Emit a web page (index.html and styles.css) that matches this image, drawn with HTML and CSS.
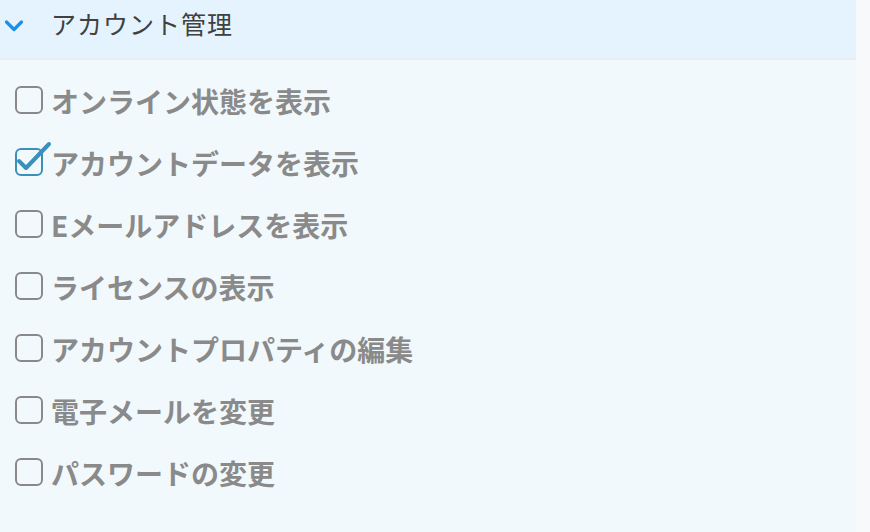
FILE: index.html
```html
<!DOCTYPE html>
<html lang="ja">
<head>
    <meta charset="UTF-8">
    <meta name="viewport" content="width=device-width, initial-scale=1.0">
    <title>アカウント管理</title>
    <link rel="stylesheet" href="styles.css">
</head>
<body>
    <div class="panel">
        <div class="panel-header">
            <svg class="chevron" width="20" height="14" viewBox="0 0 20 14">
                <path d="M2.5 3 L10 10.5 L17.5 3" fill="none" stroke="#1d8fe6" stroke-width="3.2" stroke-linecap="round" stroke-linejoin="round"/>
            </svg>
            <span class="panel-title">アカウント管理</span>
        </div>

        <ul class="perm-list">
            <li class="perm-item">
                <span class="box"></span>
                <span class="perm-label">オンライン状態を表示</span>
            </li>
            <li class="perm-item">
                <span class="box checked">
                    <!-- チェックマークは枠の外まで伸びる -->
                    <svg class="tick" width="40" height="34" viewBox="0 0 40 34">
                        <path d="M6 20 L13 27 L36 3" fill="none" stroke="#3a8fbb" stroke-width="4" stroke-linecap="round" stroke-linejoin="round"/>
                    </svg>
                </span>
                <span class="perm-label">アカウントデータを表示</span>
            </li>
            <li class="perm-item">
                <span class="box"></span>
                <span class="perm-label">Eメールアドレスを表示</span>
            </li>
            <li class="perm-item">
                <span class="box"></span>
                <span class="perm-label">ライセンスの表示</span>
            </li>
            <li class="perm-item">
                <span class="box"></span>
                <span class="perm-label">アカウントプロパティの編集</span>
            </li>
            <li class="perm-item">
                <span class="box"></span>
                <span class="perm-label">電子メールを変更</span>
            </li>
            <li class="perm-item">
                <span class="box"></span>
                <span class="perm-label">パスワードの変更</span>
            </li>
        </ul>
    </div>
</body>
</html>
```

FILE: styles.css
```css
* {
    margin: 0;
    padding: 0;
    box-sizing: border-box;
}

body {
    font-family: "Noto Sans CJK JP", "Noto Sans", sans-serif;
    background-color: #f8f9fa;
    width: 870px;
    height: 532px;
    overflow: hidden;
}

.panel {
    width: 856px;
    height: 532px;
    background-color: #f2f9fd;
}

.panel-header {
    height: 60px;
    padding-bottom: 12px;
    background-color: #e4f3fd;
    border-bottom: 2px solid #eaeef1;
    display: flex;
    align-items: center;
}

.chevron {
    margin-left: 4px;
    margin-top: 6px;
}

.panel-title {
    margin-left: 27px;
    font-size: 25px;
    color: #404040;
    letter-spacing: 1px;
}

.perm-list {
    list-style: none;
    padding-top: 9px;
}

.perm-item {
    height: 62px;
    display: flex;
    align-items: center;
    padding-left: 15px;
}

.box {
    position: relative;
    width: 28px;
    height: 28px;
    border: 2px solid #898989;
    border-radius: 6px;
    flex-shrink: 0;
}

.box.checked {
    border-color: #3a8fbb;
}

.tick {
    position: absolute;
    left: -4px;
    top: -9px;
}

.perm-label {
    margin-left: 8px;
    font-size: 28px;
    font-weight: bold;
    color: #8a8a8a;
    position: relative;
    top: 1px;
}
```
